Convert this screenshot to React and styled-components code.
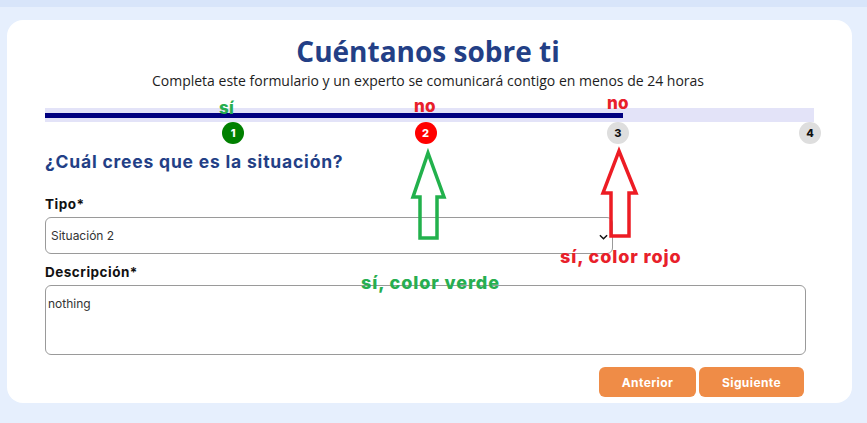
import React from 'react';
import styled, { createGlobalStyle } from 'styled-components';

const GlobalStyle = createGlobalStyle`
  * { box-sizing: border-box; }
  body {
    margin: 0;
    background: #e6effd;
    font-family: 'Open Sans', sans-serif;
  }
`;

const steps = [
  { n: 1, state: 'done' },
  { n: 2, state: 'current' },
  { n: 3, state: 'todo' },
  { n: 4, state: 'todo' },
];

const App = () => {
  return (
    <Page>
      <GlobalStyle />
      <TopStrip />
      <Card>
        <Title>Cuéntanos sobre ti</Title>
        <Subtitle>
          Completa este formulario y un experto se comunicará contigo en menos de 24 horas
        </Subtitle>

        <Progress>
          <Track>
            <Fill style={{ width: '75.2%' }} />
          </Track>
          <Steps>
            {steps.map((s) => (
              <StepSlot key={s.n}>
                <StepDot $state={s.state}>{s.n}</StepDot>
              </StepSlot>
            ))}
          </Steps>
        </Progress>

        <Question>¿Cuál crees que es la situación?</Question>

        <Field>
          <Label>Tipo*</Label>
          <SelectBox>
            <SelectText>Situación 2</SelectText>
            <Chevron viewBox="0 0 10 6">
              <path d="M1 1l4 4 4-4" fill="none" stroke="#111" strokeWidth="1.6" />
            </Chevron>
          </SelectBox>
        </Field>

        <Field>
          <Label>Descripción*</Label>
          <TextArea defaultValue="nothing" />
        </Field>

        <Actions>
          <Button $w={97}>Anterior</Button>
          <Button $w={105}>Siguiente</Button>
        </Actions>

        {/* paint annotations drawn over the form */}
        <Overlay viewBox="0 0 845 383">
          <path
            d="M421 133 L437 177 L430 177 L430 218 L413 218 L413 177 L406 177 Z"
            fill="none"
            stroke="#22b14c"
            strokeWidth="3.5"
          />
          <path
            d="M612 131 L629 173 L622 173 L622 216 L604 216 L604 173 L596 173 Z"
            fill="none"
            stroke="#ed1c24"
            strokeWidth="3.5"
          />
        </Overlay>
        <Note $color="#27ae50" style={{ left: 212, top: 78 }}>sí</Note>
        <Note $color="#e8202a" style={{ left: 407, top: 76 }}>no</Note>
        <Note $color="#e8202a" style={{ left: 600, top: 73 }}>no</Note>
        <Note $color="#e8202a" $wide style={{ left: 553, top: 226 }}>sí, color rojo</Note>
        <Note $color="#27ae50" $wide style={{ left: 354, top: 252 }}>sí, color verde</Note>
      </Card>
    </Page>
  );
};

export default App;

const Page = styled.div`
  min-height: 423px;
  padding: 0 15px 20px 7px;
`;
const TopStrip = styled.div`
  height: 7px;
  margin: 0 -15px 13px -7px;
  background: #d8e5fa;
`;
const Card = styled.div`
  position: relative;
  width: 845px;
  height: 383px;
  background: #fff;
  border-radius: 16px;
  padding: 14px 41px 0 38px;
  display: flex;
  flex-direction: column;
`;
const Title = styled.h1`
  margin: 0;
  text-align: center;
  font-family: 'Open Sans', sans-serif;
  font-weight: 700;
  font-size: 28px;
  line-height: 34px;
  color: #233f86;
`;
const Subtitle = styled.p`
  margin: 4px 0 0;
  text-align: center;
  font-size: 14px;
  line-height: 18px;
  color: #1d1d1d;
`;
const Progress = styled.div`
  margin-top: 18px;
  width: 769px;
`;
const Track = styled.div`
  height: 14px;
  background: #e3e3f8;
  display: flex;
  align-items: center;
  padding-top: 1px;
`;
const Fill = styled.div`
  height: 5px;
  background: #000080;
`;
const Steps = styled.div`
  display: grid;
  grid-template-columns: repeat(4, 1fr);
`;
const StepSlot = styled.div`
  display: flex;
  justify-content: flex-end;
  margin-right: -7px;
`;
const dotColors = {
  done: ['#008000', '#fff'],
  current: ['#ff0000', '#fff'],
  todo: ['#dedede', '#111'],
};
const StepDot = styled.div`
  width: 22px;
  height: 22px;
  border-radius: 50%;
  background: ${(p) => dotColors[p.$state][0]};
  color: ${(p) => dotColors[p.$state][1]};
  display: flex;
  align-items: center;
  justify-content: center;
  font-family: Inter, sans-serif;
  font-weight: 800;
  font-size: 11px;
`;
const Question = styled.h2`
  margin: 7px 0 0;
  font-family: Inter, sans-serif;
  font-weight: 700;
  font-size: 17.5px;
  letter-spacing: 0.8px;
  line-height: 22px;
  color: #233f86;
`;
const Field = styled.div`
  margin-top: 22px;
  display: flex;
  flex-direction: column;
  & + & {
    margin-top: 9px;
  }
`;
const Label = styled.label`
  font-family: Inter, sans-serif;
  font-weight: 700;
  font-size: 13.5px;
  letter-spacing: 0.5px;
  line-height: 18px;
  color: #111;
  margin-bottom: 4px;
`;
const SelectBox = styled.div`
  width: 568px;
  height: 37px;
  border: 1px solid #9a9a9a;
  border-radius: 6px;
  display: flex;
  align-items: center;
  justify-content: space-between;
  padding: 0 4px 0 5px;
`;
const SelectText = styled.span`
  font-family: Inter, sans-serif;
  font-size: 12px;
  color: #333;
`;
const Chevron = styled.svg`
  width: 9px;
  height: 6px;
  margin-top: 3px;
`;
const TextArea = styled.textarea`
  width: 761px;
  height: 70px;
  border: 1px solid #9a9a9a;
  border-radius: 6px;
  padding: 10px 2px;
  resize: none;
  font-family: Inter, sans-serif;
  font-size: 12px;
  color: #333;
  outline: none;
`;
const Actions = styled.div`
  display: flex;
  justify-content: flex-end;
  gap: 3px;
  width: 759px;
  margin-top: 12px;
`;
const Button = styled.button`
  width: ${(p) => p.$w}px;
  height: 30px;
  border: none;
  border-radius: 6px;
  background: #ef8c47;
  color: #fff;
  font-family: Inter, sans-serif;
  font-weight: 700;
  font-size: 12px;
  letter-spacing: 0.4px;
`;
const Overlay = styled.svg`
  position: absolute;
  left: 0;
  top: 0;
  width: 845px;
  height: 383px;
  pointer-events: none;
`;
const Note = styled.span`
  position: absolute;
  font-family: Inter, sans-serif;
  font-weight: 800;
  font-size: ${(p) => (p.$wide ? 18 : 17)}px;
  letter-spacing: ${(p) => (p.$wide ? 0.9 : 0.3)}px;
  color: ${(p) => p.$color};
  white-space: nowrap;
`;
